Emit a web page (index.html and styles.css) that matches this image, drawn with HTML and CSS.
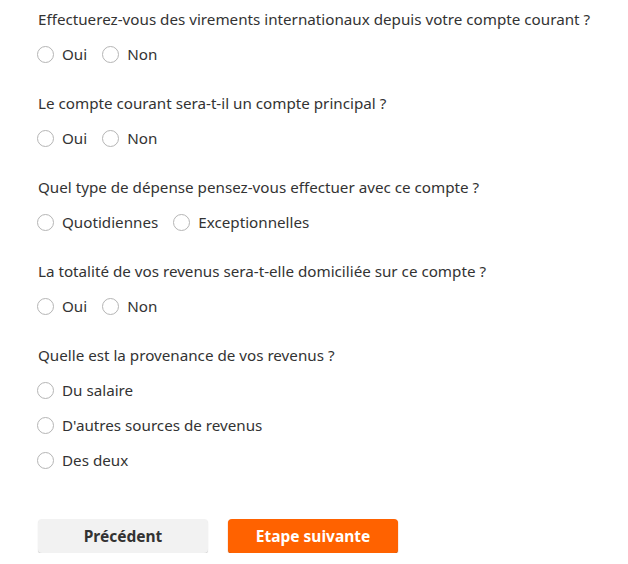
FILE: index.html
```html
<!DOCTYPE html>
<html lang="fr">
<head>
    <meta charset="UTF-8">
    <title>Questionnaire compte courant</title>
    <link rel="stylesheet" href="styles.css">
</head>
<body>
    <form class="questionnaire">
        <div class="question">
            <p class="question-label">Effectuerez-vous des virements internationaux depuis votre compte courant ?</p>
            <div class="options inline">
                <label class="option"><input type="radio" name="virements" value="oui"><span class="radio"></span>Oui</label>
                <label class="option"><input type="radio" name="virements" value="non"><span class="radio"></span>Non</label>
            </div>
        </div>

        <div class="question">
            <p class="question-label">Le compte courant sera-t-il un compte principal ?</p>
            <div class="options inline">
                <label class="option"><input type="radio" name="principal" value="oui"><span class="radio"></span>Oui</label>
                <label class="option"><input type="radio" name="principal" value="non"><span class="radio"></span>Non</label>
            </div>
        </div>

        <div class="question">
            <p class="question-label">Quel type de dépense pensez-vous effectuer avec ce compte ?</p>
            <div class="options inline">
                <label class="option"><input type="radio" name="depense" value="quotidiennes"><span class="radio"></span>Quotidiennes</label>
                <label class="option"><input type="radio" name="depense" value="exceptionnelles"><span class="radio"></span>Exceptionnelles</label>
            </div>
        </div>

        <div class="question">
            <p class="question-label">La totalité de vos revenus sera-t-elle domiciliée sur ce compte ?</p>
            <div class="options inline">
                <label class="option"><input type="radio" name="revenus" value="oui"><span class="radio"></span>Oui</label>
                <label class="option"><input type="radio" name="revenus" value="non"><span class="radio"></span>Non</label>
            </div>
        </div>

        <div class="question">
            <p class="question-label">Quelle est la provenance de vos revenus ?</p>
            <div class="options">
                <label class="option"><input type="radio" name="provenance" value="salaire"><span class="radio"></span>Du salaire</label>
                <label class="option"><input type="radio" name="provenance" value="autres"><span class="radio"></span>D'autres sources de revenus</label>
                <label class="option"><input type="radio" name="provenance" value="deux"><span class="radio"></span>Des deux</label>
            </div>
        </div>

        <div class="actions">
            <button type="button" class="btn btn-secondary">Précédent</button>
            <button type="submit" class="btn btn-primary">Etape suivante</button>
        </div>
    </form>
</body>
</html>
```

FILE: styles.css
```css
body {
    margin: 0;
    padding: 7px 0 0 37px;
    font-family: 'Noto Sans', sans-serif;
    font-size: 15.2px;
    line-height: 24px;
    color: #333;
    background-color: #fff;
}

.questionnaire {
    display: flex;
    flex-direction: column;
    gap: 25px;
}

.question {
    display: flex;
    flex-direction: column;
    gap: 11px;
}

.question-label {
    margin: 0;
    padding-left: 1px;
}

.options {
    display: flex;
    flex-direction: column;
    gap: 11px;
}

.options.inline {
    flex-direction: row;
    gap: 15px;
}

.option {
    display: flex;
    align-items: center;
    gap: 8px;
    cursor: pointer;
}

/* hide the native radio, draw our own circle */
.option input {
    display: none;
}

.radio {
    width: 15px;
    height: 15px;
    border: 1px solid #b5b5b5;
    border-radius: 50%;
    background-color: #fff;
}

.option input:checked + .radio {
    border-color: #ff6200;
    box-shadow: inset 0 0 0 4px #fff;
    background-color: #ff6200;
}

.actions {
    display: flex;
    gap: 20px;
    margin-top: 22px;
    padding-left: 1px;
}

.btn {
    width: 170px;
    height: 34px;
    border: none;
    border-radius: 4px;
    font-family: inherit;
    font-size: 15.5px;
    font-weight: bold;
    cursor: pointer;
}

.btn-secondary {
    background-color: #f2f2f2;
    color: #333;
    box-shadow: 0 1px 1px rgba(0, 0, 0, 0.2);
}

.btn-primary {
    background-color: #ff6200;
    color: #fff;
    box-shadow: 0 1px 1px #c54b00;
}
```
